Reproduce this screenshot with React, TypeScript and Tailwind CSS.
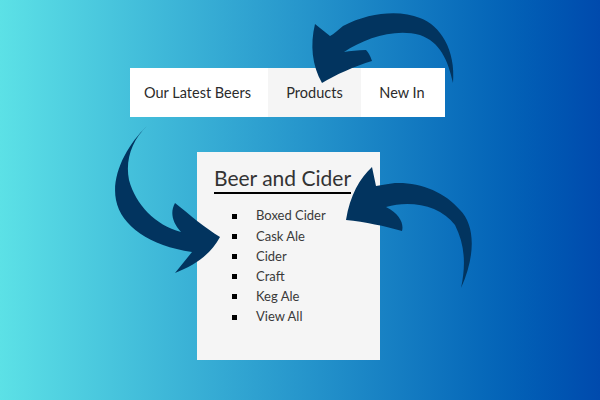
import React from "react";

const items = ["Boxed Cider", "Cask Ale", "Cider", "Craft", "Keg Ale", "View All"];

const Arrows = () => (
  <svg
    className="absolute inset-0 pointer-events-none"
    width="600"
    height="400"
    viewBox="0 0 600 400"
  >
    <g fill="#02345f">
      {/* top arrow, tail right, head pointing down-left at Products */}
      <path d="M453,83 C456,50 440,25 420,18 C400,10 370,12 343,26 C338,30 334,34 330,36 L315,24 C310,45 312,65 322,83 C335,75 355,66 372,61 C370,55 368,52 366,50 C358,50 350,51 344,52 C365,38 395,28 420,35 C440,42 448,60 453,83 Z" />
      {/* left arrow, tail top, head pointing right into the panel */}
      <path d="M147,126 C127,145 111,175 116,200 C121,226 150,246 192,252 L175,273 C195,265 210,255 220,237 C205,228 190,215 175,203 C170,212 172,222 181,232 C155,225 136,205 129,180 C125,160 132,140 147,126 Z" />
      {/* right arrow, tail bottom, head pointing left at heading */}
      <path d="M461,288 C476,255 475,225 460,210 C445,192 420,182 395,183 C388,184 382,185 376,186 L372,167 C360,178 350,195 346,220 C365,222 385,226 402,231 C404,224 400,214 386,207 C410,200 440,205 455,225 C465,245 466,265 461,288 Z" />
    </g>
  </svg>
);

export default function App() {
  return (
    <div
      className="relative w-[600px] h-[400px] overflow-hidden bg-linear-to-r from-[#5ce1e6] to-[#004aad] pt-[68px] pl-[130px]"
      style={{ fontFamily: "Lato, 'Open Sans', sans-serif" }}
    >
      <nav className="flex h-[49px] w-[315px] bg-white text-[14.5px] text-[#2b2b2b]">
        <div className="flex w-[138px] items-center pl-[14px]">Our Latest Beers</div>
        <div className="flex w-[93px] items-center justify-center bg-[#f5f5f5]">Products</div>
        <div className="flex w-[84px] items-center justify-center pr-[2px]">New In</div>
      </nav>
      <div className="ml-[67px] mt-[35px] h-[208px] w-[183px] bg-[#f5f5f5] pl-[17px] pt-[12px]">
        <h2 className="inline-block border-b-2 border-black text-[21px] leading-[28px] text-[#333333]">
          Beer and Cider
        </h2>
        <ul className="mt-[12px]">
          {items.map((item) => (
            <li key={item} className="flex h-[20.2px] items-center text-[13px] text-[#3a3a3a]">
              <span className="ml-[18px] mr-[19px] h-[5px] w-[5px] bg-black"></span>
              {item}
            </li>
          ))}
        </ul>
      </div>
      <Arrows />
    </div>
  );
}
